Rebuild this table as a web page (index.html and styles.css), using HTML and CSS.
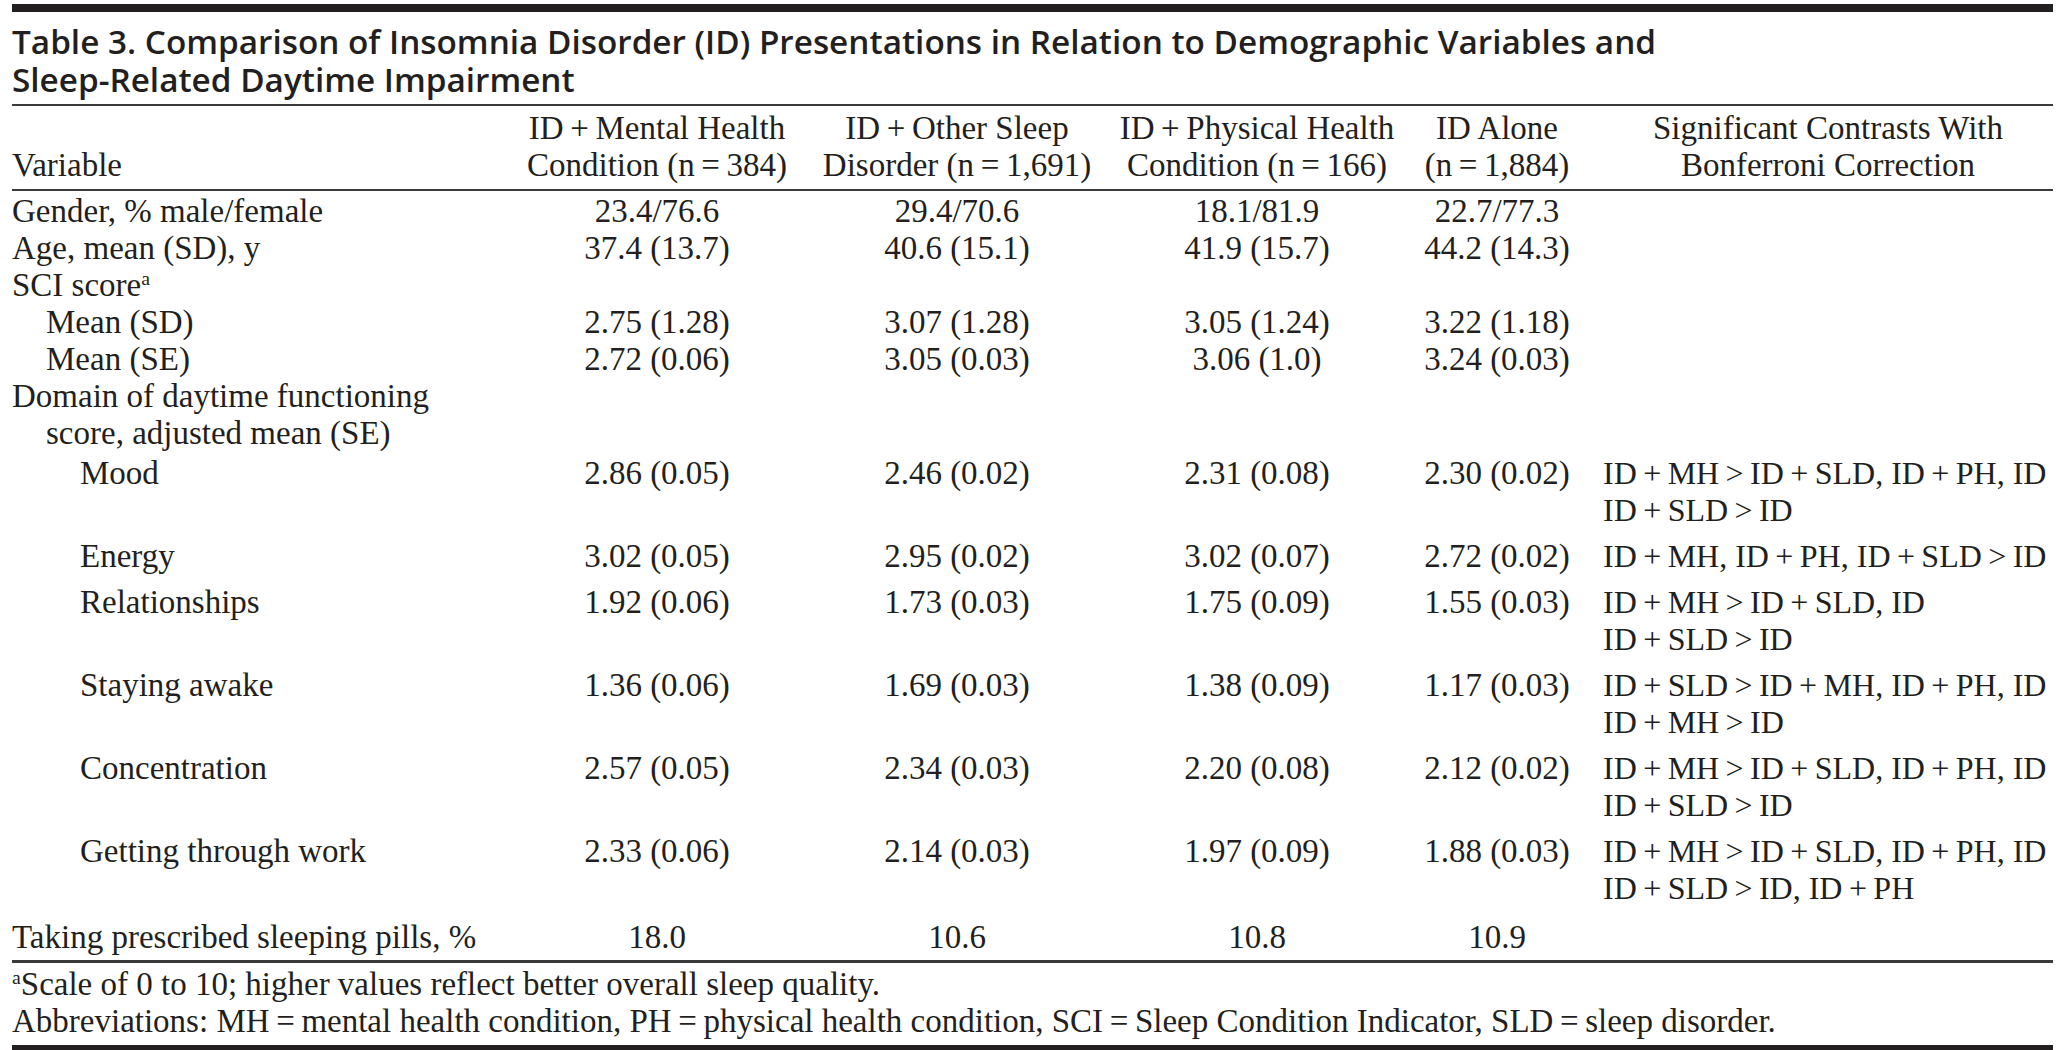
FILE: index.html
```html
<!DOCTYPE html>
<html lang="en">
<head>
<meta charset="utf-8">
<title>Table 3</title>
<link rel="stylesheet" href="styles.css">
</head>
<body>
<div class="page">
  <h1 class="title">Table 3. Comparison of Insomnia Disorder (ID) Presentations in Relation to Demographic Variables and<br>Sleep-Related Daytime Impairment</h1>
  <table class="tbl">
    <colgroup>
      <col class="c-var"><col class="c-num"><col class="c-num"><col class="c-num"><col class="c-alone"><col class="c-con">
    </colgroup>
    <thead>
      <tr>
        <th class="h-var">Variable</th>
        <th>ID&thinsp;+&thinsp;Mental Health<br>Condition (n&thinsp;=&thinsp;384)</th>
        <th>ID&thinsp;+&thinsp;Other Sleep<br>Disorder (n&thinsp;=&thinsp;1,691)</th>
        <th>ID&thinsp;+&thinsp;Physical Health<br>Condition (n&thinsp;=&thinsp;166)</th>
        <th>ID Alone<br>(n&thinsp;=&thinsp;1,884)</th>
        <th class="h-con">Significant Contrasts With<br>Bonferroni Correction</th>
      </tr>
    </thead>
    <tbody>
      <tr class="first">
        <td class="var">Gender, % male/female</td>
        <td>23.4/76.6</td><td>29.4/70.6</td><td>18.1/81.9</td><td>22.7/77.3</td><td class="con"></td>
      </tr>
      <tr>
        <td class="var">Age, mean (SD), y</td>
        <td>37.4 (13.7)</td><td>40.6 (15.1)</td><td>41.9 (15.7)</td><td>44.2 (14.3)</td><td class="con"></td>
      </tr>
      <tr>
        <td class="var">SCI score<sup>a</sup></td>
        <td></td><td></td><td></td><td></td><td class="con"></td>
      </tr>
      <tr>
        <td class="var ind1">Mean (SD)</td>
        <td>2.75 (1.28)</td><td>3.07 (1.28)</td><td>3.05 (1.24)</td><td>3.22 (1.18)</td><td class="con"></td>
      </tr>
      <tr>
        <td class="var ind1">Mean (SE)</td>
        <td>2.72 (0.06)</td><td>3.05 (0.03)</td><td>3.06 (1.0)</td><td>3.24 (0.03)</td><td class="con"></td>
      </tr>
      <tr>
        <td class="var">Domain of daytime functioning<br><span class="hang">score, adjusted mean (SE)</span></td>
        <td></td><td></td><td></td><td></td><td class="con"></td>
      </tr>
      <tr class="sub">
        <td class="var ind2">Mood</td>
        <td>2.86 (0.05)</td><td>2.46 (0.02)</td><td>2.31 (0.08)</td><td>2.30 (0.02)</td>
        <td class="con">ID&thinsp;+&thinsp;MH&thinsp;&gt;&thinsp;ID&thinsp;+&thinsp;SLD, ID&thinsp;+&thinsp;PH, ID<br>ID&thinsp;+&thinsp;SLD&thinsp;&gt;&thinsp;ID</td>
      </tr>
      <tr class="sub">
        <td class="var ind2">Energy</td>
        <td>3.02 (0.05)</td><td>2.95 (0.02)</td><td>3.02 (0.07)</td><td>2.72 (0.02)</td>
        <td class="con">ID&thinsp;+&thinsp;MH, ID&thinsp;+&thinsp;PH, ID&thinsp;+&thinsp;SLD&thinsp;&gt;&thinsp;ID</td>
      </tr>
      <tr class="sub">
        <td class="var ind2">Relationships</td>
        <td>1.92 (0.06)</td><td>1.73 (0.03)</td><td>1.75 (0.09)</td><td>1.55 (0.03)</td>
        <td class="con">ID&thinsp;+&thinsp;MH&thinsp;&gt;&thinsp;ID&thinsp;+&thinsp;SLD, ID<br>ID&thinsp;+&thinsp;SLD&thinsp;&gt;&thinsp;ID</td>
      </tr>
      <tr class="sub">
        <td class="var ind2">Staying awake</td>
        <td>1.36 (0.06)</td><td>1.69 (0.03)</td><td>1.38 (0.09)</td><td>1.17 (0.03)</td>
        <td class="con">ID&thinsp;+&thinsp;SLD&thinsp;&gt;&thinsp;ID&thinsp;+&thinsp;MH, ID&thinsp;+&thinsp;PH, ID<br>ID&thinsp;+&thinsp;MH&thinsp;&gt;&thinsp;ID</td>
      </tr>
      <tr class="sub">
        <td class="var ind2">Concentration</td>
        <td>2.57 (0.05)</td><td>2.34 (0.03)</td><td>2.20 (0.08)</td><td>2.12 (0.02)</td>
        <td class="con">ID&thinsp;+&thinsp;MH&thinsp;&gt;&thinsp;ID&thinsp;+&thinsp;SLD, ID&thinsp;+&thinsp;PH, ID<br>ID&thinsp;+&thinsp;SLD&thinsp;&gt;&thinsp;ID</td>
      </tr>
      <tr class="sub">
        <td class="var ind2">Getting through work</td>
        <td>2.33 (0.06)</td><td>2.14 (0.03)</td><td>1.97 (0.09)</td><td>1.88 (0.03)</td>
        <td class="con">ID&thinsp;+&thinsp;MH&thinsp;&gt;&thinsp;ID&thinsp;+&thinsp;SLD, ID&thinsp;+&thinsp;PH, ID<br>ID&thinsp;+&thinsp;SLD&thinsp;&gt;&thinsp;ID, ID&thinsp;+&thinsp;PH</td>
      </tr>
      <tr class="last">
        <td class="var">Taking prescribed sleeping pills, %</td>
        <td>18.0</td><td>10.6</td><td>10.8</td><td>10.9</td><td class="con"></td>
      </tr>
    </tbody>
  </table>
  <div class="notes">
    <p class="note"><sup>a</sup>Scale of 0 to 10; higher values reflect better overall sleep quality.</p>
    <p class="note">Abbreviations: MH&thinsp;=&thinsp;mental health condition, PH&thinsp;=&thinsp;physical health condition, SCI&thinsp;=&thinsp;Sleep Condition Indicator, SLD&thinsp;=&thinsp;sleep disorder.</p>
  </div>
</div>
</body>
</html>
```

FILE: styles.css
```css
* { box-sizing: border-box; }

html, body {
  margin: 0;
  padding: 0;
  background: #ffffff;
}

body {
  font-family: "Liberation Serif", "Times New Roman", serif;
  font-size: 33px;
  line-height: 37px;
  color: #231f20;
}

.page {
  width: 2065px;
  padding: 4px 12px 0;
}

.title {
  margin: 0;
  border-top: 8px solid #231f20;
  border-bottom: 2px solid #3a3a3a;
  padding: 10px 0 6px;
  font-family: "Open Sans", "Liberation Sans", sans-serif;
  font-stretch: normal;
  font-weight: 600;
  font-size: 33.3px;
  line-height: 38px;
  letter-spacing: 0;
  white-space: nowrap;
  color: #231f20;
}

.tbl {
  width: 2041px;
  table-layout: fixed;
  border-collapse: separate;
  border-spacing: 0;
}

.c-var { width: 495px; }
.c-num { width: 300px; }
.c-alone { width: 180px; }
.c-con { width: 466px; }

.tbl th {
  font-weight: 400;
  text-align: center;
  vertical-align: bottom;
  padding: 4px 0 5px;
  border-bottom: 2px solid #3a3a3a;
  white-space: nowrap;
}

.tbl th.h-var { text-align: left; }
.tbl th.h-con { padding-left: 16px; }

.tbl td {
  padding: 0;
  text-align: center;
  vertical-align: top;
  white-space: nowrap;
}

.tbl td.var { text-align: left; }
.tbl td.ind1 { padding-left: 34px; }
.tbl td.ind2 { padding-left: 68px; }
.tbl td.con {
  text-align: left;
  padding-left: 16px;
  font-size: 32px;
}

.hang { padding-left: 34px; }

.tbl tr.first td { padding-top: 2px; }
.tbl tr.sub td { padding-top: 3px; padding-bottom: 6px; }
.tbl tr.last td {
  padding-top: 6px;
  padding-bottom: 4px;
  border-bottom: 3px solid #3a3a3a;
}

sup {
  font-size: 0.6em;
  line-height: 0;
  vertical-align: 0.55em;
}

.notes {
  padding: 3px 0 5px;
  border-bottom: 8px solid #231f20;
}

.note {
  margin: 0;
  white-space: nowrap;
}
```
